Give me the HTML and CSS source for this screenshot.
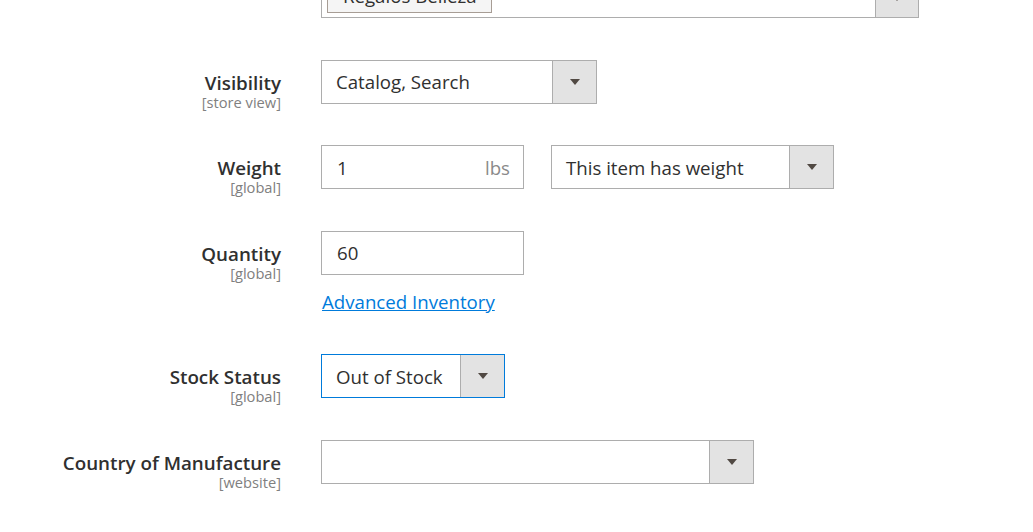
FILE: index.html
```html
<!DOCTYPE html>
<html lang="en">
<head>
<meta charset="utf-8">
<title>Product form</title>
<link rel="stylesheet" href="styles.css">
</head>
<body>
<div class="form">
  <div class="row row-top">
    <div class="label-col"></div>
    <div class="control">
      <div class="select multiselect w-top">
        <div class="select-value"><span class="crumb">Regalos Belleza</span></div>
        <div class="select-btn"><span class="arrow"></span></div>
      </div>
    </div>
  </div>

  <div class="row">
    <div class="label-col">
      <div class="label">Visibility</div>
      <div class="scope">[store view]</div>
    </div>
    <div class="control">
      <div class="select w-vis">
        <div class="select-value">Catalog, Search</div>
        <div class="select-btn"><span class="arrow"></span></div>
      </div>
    </div>
  </div>

  <div class="row">
    <div class="label-col">
      <div class="label">Weight</div>
      <div class="scope">[global]</div>
    </div>
    <div class="control inline">
      <div class="input w-short">
        <span class="input-value">1</span>
        <span class="addon">lbs</span>
      </div>
      <div class="select w-weight">
        <div class="select-value">This item has weight</div>
        <div class="select-btn"><span class="arrow"></span></div>
      </div>
    </div>
  </div>

  <div class="row">
    <div class="label-col">
      <div class="label">Quantity</div>
      <div class="scope">[global]</div>
    </div>
    <div class="control">
      <div class="input w-short">
        <span class="input-value">60</span>
      </div>
      <a class="link" href="#">Advanced Inventory</a>
    </div>
  </div>

  <div class="row">
    <div class="label-col">
      <div class="label">Stock Status</div>
      <div class="scope">[global]</div>
    </div>
    <div class="control">
      <div class="select focused w-stock">
        <div class="select-value">Out of Stock</div>
        <div class="select-btn"><span class="arrow"></span></div>
      </div>
    </div>
  </div>

  <div class="row">
    <div class="label-col">
      <div class="label">Country of Manufacture</div>
      <div class="scope">[website]</div>
    </div>
    <div class="control">
      <div class="select w-country">
        <div class="select-value"></div>
        <div class="select-btn"><span class="arrow"></span></div>
      </div>
    </div>
  </div>
</div>
</body>
</html>
```

FILE: styles.css
```css
html, body {
  margin: 0;
  padding: 0;
  background: #ffffff;
}

body {
  font-family: "Open Sans", "Liberation Sans", sans-serif;
  color: #303030;
  width: 1033px;
  height: 532px;
  overflow: hidden;
}

.form {
  margin-top: -26px;
}

.row {
  display: grid;
  grid-template-columns: 281px 1fr;
  column-gap: 40px;
  align-items: start;
  margin-bottom: 35.5px;
}

.label-col {
  box-sizing: border-box;
  min-height: 50px;
  text-align: right;
  padding-top: 12px;
}

.label {
  font-size: 18.8px;
  font-weight: 600;
  line-height: 22px;
  color: #303030;
}

.scope {
  font-size: 14.67px;
  line-height: 16px;
  color: #808080;
}

.control {
  display: flex;
  flex-direction: column;
  align-items: flex-start;
}

.control.inline {
  flex-direction: row;
  gap: 27px;
}

.select,
.input {
  box-sizing: border-box;
  height: 44px;
  border: 1px solid #adadad;
  background: #ffffff;
  display: flex;
  align-items: stretch;
  font-size: 18.67px;
  color: #303030;
}

.select.focused {
  border-color: #007bdb;
}

.select-value {
  flex: 1;
  display: flex;
  align-items: center;
  padding-left: 14px;
  white-space: nowrap;
  overflow: hidden;
}

.select-btn {
  width: 43px;
  flex: none;
  background: #e3e3e3;
  border-left: 1px solid #adadad;
  display: flex;
  align-items: center;
  justify-content: center;
}

.arrow {
  width: 0;
  height: 0;
  border-left: 5px solid transparent;
  border-right: 5px solid transparent;
  border-top: 6px solid #514943;
}

.multiselect .select-value {
  padding-left: 5px;
  align-items: flex-start;
}

.multiselect .select-btn {
  align-items: flex-end;
  padding-bottom: 16px;
  box-sizing: border-box;
}

.crumb {
  box-sizing: border-box;
  height: 31px;
  display: flex;
  align-items: center;
  padding: 0 16px 4px 15px;
  width: 165px;
  border: 1px solid #a79d95;
  background: #f5f5f5;
  font-size: 18.67px;
  color: #303030;
  margin-top: 7px;
}

.input {
  align-items: center;
  justify-content: space-between;
  padding: 0 13px 0 15px;
}

.addon {
  color: #8a8a8a;
}

.link {
  margin-top: 14px;
  margin-bottom: 4px;
  font-size: 18.67px;
  line-height: 26px;
  color: #007bdb;
  text-decoration: underline;
  padding-left: 1px;
}

.w-top { width: 598px; }
.w-vis { width: 276px; }
.w-short { width: 203px; }
.w-weight { width: 283px; }
.w-stock { width: 184px; }
.w-country { width: 433px; }
```
